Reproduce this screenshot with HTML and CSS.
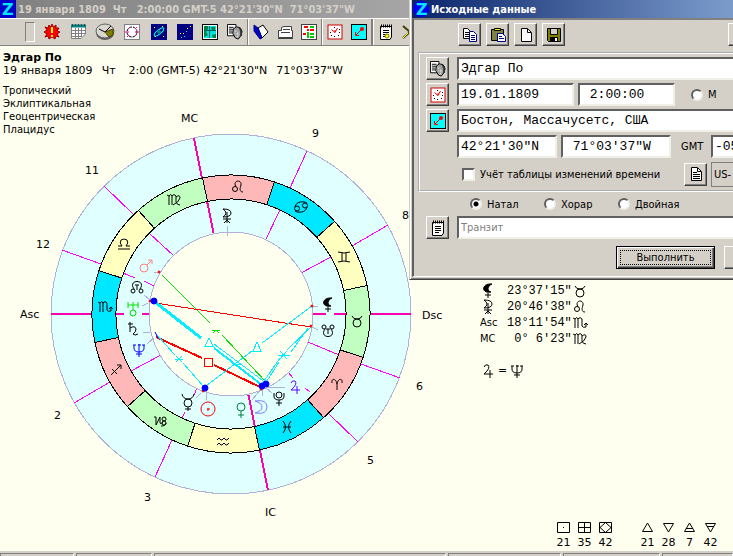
FILE: index.html
```html
<!DOCTYPE html>
<html lang="ru">
<head>
  <meta charset="UTF-8" />
  <meta name="viewport" content="width=device-width, initial-scale=1.0"/>
  <title>Эдгар По - 19 января 1809</title>
  <link rel="stylesheet" href="styles.css">
</head>
<body>

  <!-- Символы: знаки, планеты, иконки -->
  <svg class="defs" aria-hidden="true">
    <defs>
      <g id="aries"><path d="M-5 -1C-6 -6 -1 -6 0 0V6M0 0C1 -6 6 -6 5 -1"/></g>
      <g id="taurus"><circle cx="0" cy="2" r="4"/><path d="M-5 -5Q-4 -2 0 -2Q4 -2 5 -5"/></g>
      <g id="gemini"><path d="M-6 -5Q0 -3 6 -5M-6 5Q0 3 6 5M-2 -4V4M2 -4V4"/></g>
      <g id="cancer"><circle cx="-4" cy="1.5" r="2.5"/><circle cx="4" cy="-1.5" r="2.5"/><path d="M-6 0C-5 -6 3 -6 6 -4M6 0C5 6 -3 6 -6 4"/></g>
      <g id="leo"><circle cx="-3" cy="2" r="2.5"/><path d="M-2 0C-6 -7 4 -8 3 -2C2 1 1 5 5 5"/></g>
      <g id="virgo"><path d="M-7 -5L-5 -4V5M-5 -4Q-3 -7 -2 -4V5M-2 -4Q0 -7 2 -4V2Q3 5 6 5M2 -3Q6 -6 6 -2Q5 2 -1 5"/></g>
      <g id="libra"><path d="M-6 5H6M-6 2H-2Q-5 -1 -3 -4Q0 -6 3 -4Q5 -1 2 2H6"/></g>
      <g id="scorpio"><path d="M-7 -5L-5 -4V5M-5 -4Q-3 -7 -2 -4V5M-2 -4Q0 -7 2 -4V3Q3 5 6 4V0M4 2L6 0L8 2"/></g>
      <g id="sagittarius"><path d="M-5 5L5 -5M1 -5H5V-1M-4 -1L1 4"/></g>
      <g id="capricorn"><path d="M-6 -4H-4V4L0 -4V2Q1 4 3 1M6 2Q6 5 1 5"/><circle cx="4" cy="-2" r="2"/><circle cx="4" cy="2" r="2"/></g>
      <g id="aquarius"><path d="M-6 -1L-4 -3L-2 -1H-1L1 -3L3 -1H4L6 -3M-6 4L-4 2L-2 4H-1L1 2L3 4H4L6 2"/></g>
      <g id="pisces"><path d="M-4 -6Q1 0 -4 6M4 -6Q-1 0 4 6M-4 0H4"/></g>

      <g id="sun"><circle cx="0" cy="0" r="7"/><path d="M-1 0H2M0 -1V2"/></g>
      <g id="moon"><path d="M-6 -6Q6 -8 6 0Q6 8 -6 6Q1 4 1 0Q1 -4 -6 -6"/></g>
      <g id="mercury"><path d="M-6 -8Q-5 -3 0 -3Q5 -3 6 -8M0 5V9M-3 7H3"/><circle cx="0" cy="1" r="4"/></g>
      <g id="venus"><circle cx="0" cy="-3" r="4"/><path d="M0 1V8M-3 5H3"/></g>
      <g id="mars"><circle cx="-2" cy="2" r="4"/><path d="M1 -1L6 -6M2 -6H6V-2"/></g>
      <g id="jupiter"><path d="M-4 -4Q-3 -7 0 -6Q3 -3 -4 3H5M2 -1V7"/></g>
      <g id="saturn"><path d="M-5 -5H0M-3 -7V3M-3 -1Q2 -4 3 0Q3 3 0 5Q2 7 5 5"/></g>
      <g id="uranus"><path d="M-5 -7V-1M5 -7V-1M-5 -4H5M0 -7V1"/><circle cx="0" cy="4" r="3"/></g>
      <g id="neptune"><path d="M-5 -5V-2Q-5 2 0 2Q5 2 5 -2V-5M0 -6V7M-3 4H3M-6 -5H-3M3 -5H6M-1 -5H2"/></g>
      <g id="pluto"><circle cx="0" cy="-3" r="3"/><path d="M-5 -5V-2Q-5 2 0 2Q5 2 5 -2V-5M0 2V8M-3 5H3"/></g>
      <g id="node"><circle cx="-4" cy="4" r="2"/><circle cx="4" cy="4" r="2"/><path d="M-3 2C-10 -8 10 -8 3 2M-2 -2H2M0 -2V3"/></g>
      <g id="snode"><circle cx="-4" cy="-4" r="2"/><circle cx="4" cy="-4" r="2"/><path d="M-3 -2C-10 8 10 8 3 -2M-2 -2H2M0 -2V3"/></g>
      <g id="lilith"><path fill="currentColor" d="M4 -7C-7 -8 -7 3 3 1C-1 0 -1 -5 4 -7Z"/><path d="M0 2V7M-3 4H3"/></g>
      <g id="selena"><path d="M-4 -7Q4 -7 4 -3Q4 1 -4 1Q2 -3 -4 -7M0 -4V7M-4 3H4M-3 7L0 4L3 7"/></g>

      <path id="sector" d="M139 0A139 139 0 0 0 120.4 -69.5L99.6 -57.5A115 115 0 0 1 115 0Z"/>

      <g id="ic-face">
        <path fill="#fff" stroke="#000" d="M0.500 0.500H9.500V12.500H0.500Z"/>
        <path stroke="#000" fill="none" d="M2 3.500H7M2 5.500H7M2 7.500H6M2 9.500H6"/>
        <path fill="#a0a0a0" stroke="#000" d="M7 5L10 3L14 4L16 8L15 12L12 16L9 15L6 10Z"/>
        <path fill="#303030" d="M12 3L16 6V12L14 14L14 8Z"/>
        <path stroke="#f0f0f0" fill="none" d="M8 7.500H10M9 10.500H10M11.500 9V12M10 13.500H12"/>
      </g>
      <g id="ic-clock">
        <rect x="1" y="1" width="14" height="14" fill="#fff" stroke="#d00000"/>
        <path stroke="#f00" fill="none" d="M4.500 5.500L8 8.500L10.500 4M8 8.500V6"/>
        <path stroke="#000" fill="none" d="M7.500 3V4M7.500 12V13M3 8.500H4M12 8.500H13M4 11.500H5M11 11.500H12M12 5.500H13"/>
      </g>
      <g id="ic-place">
        <rect x="0.500" y="0.500" width="15" height="15" fill="#0ff" stroke="#000"/>
        <path stroke="#f00" fill="none" d="M11 5L5 11M4.500 8V11.500H8"/><circle cx="11" cy="5" r="2" fill="#f00"/>
      </g>
      <g id="ic-note">
        <path fill="#fff" stroke="#000" d="M2.500 2.500H13.500V13L12 15.500H2.500Z"/>
        <path stroke="#000" fill="none" stroke-dasharray="1 1" stroke-width="3" d="M3 2H14"/>
        <path stroke="#000" fill="none" d="M5 6.500H11M5 8.500H11M5 10.500H11M5 12.500H9"/>
      </g>
      <g id="ic-doc">
        <path fill="#fff" stroke="#000" d="M3.500 1.500H9.500L13.500 5.500V14.500H3.500Z"/>
        <path stroke="#000" fill="none" d="M9.500 2V5.500H13"/>
      </g>
    </defs>
  </svg>

  <header class="titlebar">
    <svg class="logo" viewBox="0 0 16 18"><rect width="16" height="18" fill="#0000c8"/><text x="2" y="15">Z</text></svg>
    <span>19 января 1809  Чт   2:00:00 GMT-5 42°21'30"N  71°03'37"W</span>
  </header>

  <nav class="toolbar">
    <div class="grip"></div>
    <button class="tool" aria-label="Сейчас"><svg viewBox="0 0 16 16"><path fill="#f00" stroke="#a00000" d="M8 0L9.500 3L12 1L12 4L15 4L13 7L16 8L13 10L15 13L12 12L11 15L8 13L5 15L4 12L1 13L3 10L0 8L3 6L1 3L4 4L5 1L7 3Z"/><path fill="#ff0" d="M7 3H9V9H7ZM7 11H9V13H7Z"/></svg></button>
    <button class="tool wide" aria-label="Календарь"><svg viewBox="0 0 16 16"><path fill="#fff" stroke="#808080" d="M1.500 1.500H15.500V10L11 14.500H1.500Z"/><path stroke="#008080" stroke-width="3" d="M1 2H16"/><path stroke="#808080" d="M2 6.500H15M2 9.500H15M2 12.500H12M5.500 4V14M8.500 4V14M11.500 4V13"/><path stroke="#000" stroke-dasharray="1 2" d="M2 1H16"/></svg></button>
    <button class="tool wide" aria-label="Время"><svg class="big" viewBox="0 0 20 18"><ellipse cx="10" cy="10" rx="9" ry="7" fill="#606060"/><ellipse cx="10" cy="8" rx="9" ry="7" fill="#d8d8d0" stroke="#606060"/><path fill="#808000" stroke="#404000" d="M10 9L18 6V12L14 14Z"/><path stroke="#000" d="M4 6L10 9L16 3"/></svg></button>
    <button class="tool wide" aria-label="Карта"><svg viewBox="0 0 16 16"><rect x="0.500" y="0.500" width="15" height="15" fill="#fff" stroke="#808080"/><circle cx="8" cy="8" r="5" fill="none" stroke="#000" stroke-dasharray="3 1"/><path stroke="#f0a" d="M1 8H5M11 8H15M11 5L13 3M5 11L3 13M5 5L4 4M11 11L12 12"/></svg></button>
    <button class="tool wide" aria-label="Система"><svg viewBox="0 0 16 16"><rect width="16" height="16" fill="#000080"/><ellipse cx="8" cy="8" rx="6" ry="2" fill="none" stroke="#0ff" transform="rotate(-40 8 8)"/><circle cx="8" cy="8" r="2" fill="#008080"/><path fill="#ff0" d="M3 3H4V4H3ZM12 12H13V13H12ZM4 12H5V13H4ZM11 2H12V3H11Z"/></svg></button>
    <button class="tool" aria-label="Небо"><svg viewBox="0 0 16 16"><rect width="16" height="16" fill="#000080"/><path fill="#ff0" d="M13 2H14V3H13ZM10 4H11V5H10ZM3 9H4V10H3ZM6 9H7V10H6Z"/><path fill="#0ff" d="M9 7H10V8H9ZM4 13H5V14H4ZM7 12H8V13H7Z"/></svg></button>
    <button class="tool" aria-label="Атлас"><svg viewBox="0 0 16 16"><rect x="0.500" y="0.500" width="15" height="15" fill="#fff" stroke="#000"/><rect x="2" y="2" width="12" height="12" fill="#00e0e0"/><path fill="#008040" d="M2 2H6V5L4 8L6 11L2 13ZM9 3H13V6L10 7ZM10 11L14 10V14H11Z"/><path stroke="#006060" fill="none" d="M2 6.500H14M7.500 2V14"/></svg></button>
    <button class="tool" aria-label="База данных"><svg viewBox="0 0 17 17"><use href="#ic-face"/></svg></button>
    <div class="sep"></div>
    <button class="tool small" aria-label="Книга"><svg viewBox="0 0 16 16"><path fill="#fff" stroke="#000" d="M5 4L10 1L15 8L9 14Z"/><path fill="#00c" stroke="#000080" d="M1 1L5 4L9 14L7 15L1 7Z"/></svg></button>
    <button class="tool small" aria-label="Папка"><svg viewBox="0 0 16 16"><path fill="#fff" stroke="#404040" d="M1.500 6.500H4.500V3.500L7 2.500H14.500V6.500H15.500V13.500H1.500Z"/><path stroke="#404040" d="M6 5.500H13M4 8.500H13M1 14.500H16"/></svg></button>
    <button class="tool small" aria-label="Таблица"><svg viewBox="0 0 16 16"><rect x="0.500" y="0.500" width="15" height="15" fill="#fff" stroke="#404040"/><path fill="#f00" d="M3 2H7V4H3ZM2 9H5V11H2ZM9 5H13V7H9ZM6 5H8V7H6Z"/><path fill="#0c0" d="M9 2H13V4H9ZM6 8H8V14H6ZM9 9H13V11H9ZM9 12H13V14H9Z"/></svg></button>
    <div class="sep"></div>
    <button class="tool small" aria-label="Часы"><svg viewBox="0 0 16 16"><use href="#ic-clock"/></svg></button>
    <button class="tool small" aria-label="Место"><svg viewBox="0 0 16 16"><use href="#ic-place"/></svg></button>
    <div class="sep dark"></div>
    <button class="tool small" aria-label="Настройки"><svg viewBox="0 0 16 16"><use href="#ic-note"/><circle cx="9" cy="12" r="2" fill="#ff0" stroke="#808000"/></svg></button>
    <button class="tool small" aria-label="Инструменты"><svg viewBox="0 0 16 16"><path stroke="#404000" stroke-width="2" fill="none" d="M1 2L8 8M8 8L1 14"/><path stroke="#ff0" fill="none" d="M6 9L1 14"/></svg></button>
  </nav>

  <main class="canvas">
    <section class="info">
      <h1>Эдгар По</h1>
      <p class="moment"><span>19 января 1809</span><span>Чт</span><span class="clock">2:00 (GMT-5) 42°21'30"N</span><span>71°03'37"W</span></p>
      <ul>
        <li>Тропический</li>
        <li>Эклиптикальная</li>
        <li>Геоцентрическая</li>
        <li>Плацидус</li>
      </ul>
    </section>

    <svg class="chart" viewBox="0 46 450 505">
      <g class="wheel" transform="translate(231 314)">
        <circle class="disc" r="180"/>
        <g class="cusp">
          <path d="M-127 -128L-97 -99M-82 -81L-57 -58M-169 -64L-130 -50M-108 -41L-96 -36M-87 -33L-77 -28"/>
          <path d="M76 -163L59 -126M49 -104L34 -73M157 -89L121 -68M100 -57L70 -41"/>
          <path d="M127 128L97 99M79 78L74 74M62 64L57 58M169 64L130 50M108 41L77 28"/>
          <path d="M-76 163L-59 126M-49 104L-46 98M-37 81L-34 74M-157 89L-121 68M-100 57L-70 41"/>
        </g>
        <g class="axis">
          <path d="M-37 -176L-29 -136M-24 -113L-17 -79M37 176L29 136M24 113L17 79"/>
          <path d="M-180 0H-139M-115 0H-107M-89 0H-81M180 0H139M115 0H103M95 0H82"/>
        </g>
        <circle class="core" r="82"/>
        <g class="ring">
          <use class="air" href="#sector" transform="rotate(-11.8)"/>
          <use class="water" href="#sector" transform="rotate(-41.8)"/>
          <use class="fire" href="#sector" transform="rotate(-71.8)"/>
          <use class="earth" href="#sector" transform="rotate(-101.8)"/>
          <use class="air" href="#sector" transform="rotate(-131.8)"/>
          <use class="water" href="#sector" transform="rotate(-161.8)"/>
          <use class="fire" href="#sector" transform="rotate(-191.8)"/>
          <use class="earth" href="#sector" transform="rotate(-221.8)"/>
          <use class="air" href="#sector" transform="rotate(-251.8)"/>
          <use class="water" href="#sector" transform="rotate(-281.8)"/>
          <use class="fire" href="#sector" transform="rotate(-311.8)"/>
          <use class="earth" href="#sector" transform="rotate(-341.8)"/>
        </g>
      </g>

      <!-- Аспекты -->
      <g class="aspects">
        <path class="green" d="M162 275L210 323M222 335L266 382M212 330H220M213 333L216 330L219 333"/>
        <path class="red" d="M155 303L311 327M204 358H212V366H204Z"/>
        <path class="red bold" d="M156 337L202 358M214 365L260 387"/>
        <path class="cyan wide" d="M155 302L201 338"/>
        <path class="cyan bold" d="M214 348L262 385"/>
        <path class="cyan" d="M156 334L175 355M183 363L204 387M206 386L252 351M262 343L312 306M214 344L266 383M265 384L279 362M287 350L311 327M262 384L280 358M291 352L308 328"/>
        <path class="cyan" d="M209 338L205 346H213ZM257 342L253 351H261ZM175 359H183M176 356L182 362M182 356L176 362M278 355H290M280 351L287 359M287 351L280 359M233 364H241"/>
        <path class="pointer" d="M154 272L158 273M144 295L150 300M142 306L148 303M143 332L150 333M147 344L154 338M196 398L201 393M207 400L206 391M227 226V236M252 400L261 389M262 396V388M272 393L266 388M285 387H266M318 306H313M318 330L312 327"/>
      </g>
      <g class="marks">
        <circle cx="159" cy="272" r="1"/><circle cx="150" cy="301" r="1"/><circle cx="203" cy="391" r="1"/><circle cx="261" cy="389" r="1"/><circle cx="312" cy="306" r="1"/><circle cx="311" cy="326" r="1"/>
      </g>
      <g class="dots">
        <circle cx="154" cy="301" r="3"/><circle cx="205" cy="388" r="3"/><circle cx="262" cy="386" r="3"/><circle cx="266" cy="384" r="3"/><path d="M155 332L158 338"/>
      </g>

      <g class="glyphs">
        <use href="#leo" x="238" y="187"/>
        <use href="#cancer" x="301" y="207"/>
        <use href="#gemini" x="344" y="257"/>
        <use href="#taurus" x="357" y="321"/>
        <use href="#aries" x="337" y="384"/>
        <use href="#pisces" x="287" y="427"/>
        <use href="#aquarius" x="223" y="441"/>
        <use href="#capricorn" x="160" y="421"/>
        <use href="#sagittarius" x="116" y="370"/>
        <use href="#scorpio" x="105" y="307"/>
        <use href="#libra" x="124" y="244"/>
        <use href="#virgo" x="174" y="200"/>

        <use href="#selena" x="227" y="216"/>
        <use href="#mars" x="146" y="266" class="c-mars"/>
        <use href="#node" x="137" y="287"/>
        <use href="#uranus" x="133" y="309" class="c-uranus"/>
        <use href="#saturn" x="133" y="329"/>
        <use href="#neptune" x="139" y="350" class="c-neptune"/>
        <use href="#mercury" x="188" y="402"/>
        <use href="#sun" x="208" y="409" class="c-sun"/>
        <use href="#venus" x="241" y="410" class="c-venus"/>
        <use href="#moon" x="261" y="407" class="c-moon"/>
        <use href="#pluto" x="279" y="398"/>
        <use href="#jupiter" x="295" y="387" class="c-jupiter"/>
        <use href="#lilith" x="328" y="305"/>
        <use href="#snode" x="328" y="331"/>
      </g>

      <g class="houses">
        <text x="181" y="122">MC</text>
        <text x="312" y="137">9</text>
        <text x="402" y="219">8</text>
        <text x="422" y="319">Dsc</text>
        <text x="416" y="390">6</text>
        <text x="367" y="464">5</text>
        <text x="265" y="516">IC</text>
        <text x="144" y="501">3</text>
        <text x="54" y="419">2</text>
        <text x="20" y="318">Asc</text>
        <text x="36" y="248">12</text>
        <text x="85" y="174">11</text>
      </g>
    </svg>

    <aside class="side">
      <div>
        <table class="points">
          <tr><th><svg class="sign" viewBox="-8 -8 16 16"><use href="#lilith"/></svg></th><td>23°37'15"</td><td><svg class="sign" viewBox="-8 -8 16 16"><use href="#taurus"/></svg></td></tr>
          <tr><th><svg class="sign" viewBox="-8 -8 16 16"><use href="#selena"/></svg></th><td>20°46'38"</td><td><svg class="sign" viewBox="-8 -8 16 16"><use href="#leo"/></svg></td></tr>
          <tr><th>Asc</th><td>18°11'54"</td><td><svg class="sign" viewBox="-8 -8 16 16"><use href="#scorpio"/></svg></td></tr>
          <tr><th>MC</th><td> 0° 6'23"</td><td><svg class="sign" viewBox="-8 -8 16 16"><use href="#virgo"/></svg></td></tr>
        </table>
        <p class="reception"><svg class="sign" viewBox="-8 -8 16 16"><use href="#jupiter"/></svg>=<svg class="sign" viewBox="-8 -8 16 16"><use href="#neptune"/></svg></p>
      </div>

      <ul class="counts">
        <li><svg viewBox="0 0 13 11"><path d="M0.500 0.500H12.500V10.500H0.500ZM6 5.500H7"/></svg>21</li>
        <li><svg viewBox="0 0 13 11"><path d="M0.500 0.500H12.500V10.500H0.500ZM0 5.500H13M6.500 0V11"/></svg>35</li>
        <li><svg viewBox="0 0 13 11"><path d="M0.500 0.500H12.500V10.500H0.500ZM6.500 0.500L12 5.500L6.500 10.500L1 5.500Z"/></svg>42</li>
        <li class="gap"><svg viewBox="0 0 13 11"><path d="M6.500 1L1.500 9.500H11.500Z"/></svg>21</li>
        <li><svg viewBox="0 0 13 11"><path d="M6.500 10L1.500 1.500H11.500Z"/></svg>28</li>
        <li><svg viewBox="0 0 13 11"><path d="M6.500 1L1.500 9.500H11.500ZM3 6.500H10"/></svg>7</li>
        <li><svg viewBox="0 0 13 11"><path d="M6.500 10L1.500 1.500H11.500ZM3 4.500H10"/></svg>42</li>
      </ul>
    </aside>
  </main>

  <footer class="statusbar">
    <div class="p1"></div><div class="p2"></div><div class="p3"></div><div class="p4"></div><div class="p5"></div><div class="p6"></div>
  </footer>

  <!-- Окно "Исходные данные" -->
  <form class="dialog">
    <div class="dialog-title">
      <svg class="logo" viewBox="0 0 18 18"><circle cx="9" cy="9" r="8" fill="#0000f0"/><text x="4" y="15">Z</text></svg>
      <span>Исходные данные</span>
    </div>
    <div class="dialog-body">
      <div class="dialog-tools">
        <button type="button" class="btn" aria-label="Копировать"><svg viewBox="0 0 16 16"><path fill="#fff" stroke="#000" d="M1.500 1.500H5.500L8.500 4.500V11.500H1.500Z"/><path stroke="#000" d="M3 5.500H7M3 7.500H7M3 9.500H7"/><path fill="#fff" stroke="#000080" d="M7.500 4.500H11.500L14.500 7.500V14.500H7.500Z"/><path stroke="#000080" d="M9 8.500H13M9 10.500H13M9 12.500H13"/></svg></button>
        <button type="button" class="btn" aria-label="Вставить"><svg viewBox="0 0 16 16"><path fill="#808040" stroke="#000" d="M1.500 2.500H13.500V13.500H1.500Z"/><path fill="#ff0" stroke="#000" d="M4.500 3.500V1.500H10.500V3.500Z"/><path fill="#fff" stroke="#000080" d="M7.500 6.500H12.500L15.500 9.500V14.500H7.500Z"/><path stroke="#000080" d="M9 9.500H12M9 11.500H14"/></svg></button>
        <button type="button" class="btn" aria-label="Новый"><svg viewBox="0 0 16 16"><use href="#ic-doc"/></svg></button>
        <button type="button" class="btn" aria-label="Сохранить"><svg viewBox="0 0 16 16"><path fill="#808000" stroke="#000" d="M1.500 1.500H14.500V14.500H2.500L1.500 13.500Z"/><path fill="#d4d0c8" stroke="#000" d="M4.500 1.500H11.500V7.500H4.500Z"/><path fill="#000" d="M4 10H12V14H4Z"/><path fill="#fff" d="M9 11H11V14H9Z"/></svg></button>
        <button type="button" class="btn more" aria-label="Ещё"></button>
      </div>

      <div class="group">
        <div class="row">
          <button type="button" class="btn" aria-label="База"><svg viewBox="0 0 17 17"><use href="#ic-face"/></svg></button>
          <input class="field full" type="text" aria-label="Имя" value="Эдгар По">
        </div>
        <div class="row">
          <button type="button" class="btn" aria-label="Часы"><svg viewBox="0 0 16 16"><use href="#ic-clock"/></svg></button>
          <input class="field date" type="text" aria-label="Дата" value="19.01.1809">
          <input class="field time" type="text" aria-label="Время" value=" 2:00:00">
          <label class="sex"><input type="radio" name="sex">М</label>
        </div>
        <div class="row">
          <button type="button" class="btn" aria-label="Атлас"><svg viewBox="0 0 16 16"><use href="#ic-place"/></svg></button>
          <input class="field full" type="text" aria-label="Место" value="Бостон, Массачусетс, США">
        </div>
        <div class="row coords">
          <input class="field lat" type="text" aria-label="Широта" value="42°21'30&quot;N">
          <input class="field lon" type="text" aria-label="Долгота" value=" 71°03'37&quot;W">
          <label class="gmt" for="gmt">GMT</label>
          <input class="field full" type="text" id="gmt" value="-05">
        </div>
        <div class="row zone">
          <label><input type="checkbox">Учёт таблицы изменений времени</label>
          <button type="button" class="btn" aria-label="Таблица времени"><svg viewBox="0 0 16 16"><use href="#ic-doc"/><path stroke="#000" d="M5 6.500H9M5 8.500H12M5 10.500H12M5 12.500H12"/></svg></button>
          <div class="tz">US-</div>
        </div>
      </div>

      <div class="modes">
        <label><input type="radio" name="mode" checked>Натал</label>
        <label><input type="radio" name="mode">Хорар</label>
        <label><input type="radio" name="mode">Двойная</label>
      </div>

      <div class="row transit">
        <button type="button" class="btn" aria-label="Заметки"><svg viewBox="0 0 16 16"><use href="#ic-note"/></svg></button>
        <input class="field full" type="text" aria-label="Транзит" value="Транзит" disabled>
      </div>

      <div class="actions">
        <button type="button" class="btn default"><span>Выполнить</span></button>
        <button type="button" class="btn cancel" aria-label="Отмена"></button>
      </div>
    </div>
  </form>

</body>
</html>
```

FILE: styles.css
```css
* { box-sizing: border-box; }

body {
  margin: 0;
  height: 100vh;
  display: flex;
  flex-direction: column;
  position: relative;
  overflow: hidden;
  background-color: #ffffef;
  color: #000;
  font-family: "DejaVu Sans", Verdana, sans-serif;
  font-size: 11px;
}

svg { display: block; }

button, input { margin: 0; }

.defs {
  position: absolute;
  width: 0;
  height: 0;
}

.logo text {
  font-family: "DejaVu Sans", Verdana, sans-serif;
  font-size: 16px;
  font-weight: bold;
  fill: #00e8ff;
}

/* Main window */
.titlebar {
  flex: none;
  height: 18px;
  display: flex;
  align-items: center;
  gap: 2px;
  background: linear-gradient(to right, #808080, #c0c0c0 700px);
  color: #d4d0c8;
  font-family: "DejaVu Sans Condensed", Tahoma, sans-serif;
  font-weight: bold;
  white-space: pre;
}

.titlebar .logo {
  width: 16px;
  height: 18px;
}

.toolbar {
  flex: none;
  height: 28px;
  display: flex;
  align-items: center;
  overflow: hidden;
  background-color: #d4d0c8;
  border-top: 1px solid #fff;
  border-bottom: 1px solid #808080;
}

.grip {
  width: 10px;
  height: 20px;
  margin: 0 4px 0 25px;
  border: 1px solid #fff;
  border-top-color: #808080;
  border-left-color: #808080;
}

.tool {
  flex: none;
  width: 25px;
  height: 24px;
  padding: 0;
  border: 0;
  background: none;
  display: flex;
  align-items: center;
  justify-content: center;
}

.tool.wide { width: 27px; }
.tool.small { width: 24px; }

.tool svg,
.btn svg {
  width: 16px;
  height: 16px;
  fill: none;
}

.tool .big {
  width: 20px;
  height: 18px;
}

.sep {
  flex: none;
  width: 2px;
  height: 26px;
  border-left: 1px solid #808080;
  border-right: 1px solid #fff;
}

.sep.dark {
  width: 3px;
  border-left: 2px solid #808080;
}

.canvas {
  flex: 1;
  min-height: 0;
  display: grid;
  grid-template-columns: 450px 1fr;
  grid-template-rows: 100%;
}

.info {
  grid-area: 1 / 1;
  padding: 5px 3px;
}

.info h1 {
  margin: 0;
  font-size: 11px;
  line-height: 13px;
}

.moment {
  display: flex;
  gap: 9px;
  margin: 0;
  line-height: 13px;
  white-space: pre;
}

.clock { margin-left: 4px; }

.info ul {
  margin: 7px 0 0;
  padding: 0;
  list-style: none;
  font-size: 10px;
  line-height: 13px;
}

/* Chart */
.chart {
  grid-area: 1 / 1;
  width: 450px;
  height: 505px;
  fill: none;
  stroke-width: 1px;
}

.wheel,
.aspects {
  shape-rendering: crispEdges;
}

.disc { fill: #e0ffff; stroke: #b0b0d8; }
.core { fill: #ffffef; stroke: #b0b0d8; }
.cusp { stroke: #f0f; }
.axis { stroke: #ff00b0; stroke-width: 2px; }
.ring { stroke: #000; }
.air { fill: #ffffc0; }
.water { fill: #00e8ff; }
.fire { fill: #ffb8b8; }
.earth { fill: #c0ffc0; }

.green { stroke: #00e000; }
.red { stroke: #f00; }
.bold { stroke-width: 2px; }
.cyan { stroke: #00f0ff; }
.cyan.wide { stroke-width: 3px; }
.pointer { stroke: #b0b0d8; }
.dots { fill: #00f; stroke: #00f; }
.marks { fill: #f00; stroke: #f00; }

.glyphs { stroke: currentColor; }
.c-mars { color: #ff8080; }
.c-uranus { color: #00e000; }
.c-neptune { color: #00f; }
.c-sun { color: #f00; }
.c-venus { color: #008040; }
.c-moon { color: #8080ff; }
.c-jupiter { color: #6000ff; }

.houses text { fill: #000; }

/* Right side: points and counters */
.side {
  grid-area: 1 / 2;
  padding: 237px 12px 2px 30px;
  display: flex;
  flex-direction: column;
  justify-content: space-between;
}

.sign {
  width: 16px;
  height: 16px;
  fill: none;
  stroke: currentColor;
}

.points {
  border-collapse: collapse;
  font-family: "Liberation Mono", "Courier New", monospace;
  font-size: 12px;
  line-height: 16px;
}

.points th,
.points td {
  height: 16px;
  padding: 0;
  white-space: pre;
}

.points th {
  width: 27px;
  font-family: "DejaVu Sans Condensed", Tahoma, sans-serif;
  font-size: 11px;
  font-weight: normal;
  text-align: left;
}

.reception {
  display: flex;
  align-items: center;
  gap: 2px;
  margin: 16px 0 0;
  line-height: 16px;
}

.counts {
  margin: 0;
  padding: 0;
  list-style: none;
  display: flex;
  justify-content: flex-end;
}

.counts li {
  width: 21px;
  display: flex;
  flex-direction: column;
  align-items: center;
  gap: 3px;
  line-height: 13px;
}

.counts .gap { margin-left: 21px; }

.counts svg {
  width: 13px;
  height: 11px;
  fill: none;
  stroke: #000;
}

/* Status bar */
.statusbar {
  flex: none;
  height: 5px;
  padding-top: 2px;
  display: flex;
  gap: 2px;
  background-color: #d4d0c8;
}

.statusbar div {
  border-top: 1px solid #808080;
  border-left: 1px solid #808080;
  border-right: 1px solid #fff;
}

.p1 { width: 74px; }
.p2 { width: 76px; }
.p3 { width: 292px; }
.p4 { width: 113px; }
.p5 { width: 97px; }
.p6 { flex: 1; }

/* Dialog window */
.dialog {
  position: absolute;
  top: 0;
  left: 409px;
  right: 0;
  padding: 0 0 2px 2px;
  background-color: #d4d0c8;
  border-left: 1px solid #d4d0c8;
  border-bottom: 1px solid #404040;
  box-shadow: inset 1px 0 #fff, inset 0 -1px #808080;
  font-family: "DejaVu Sans Condensed", Tahoma, sans-serif;
}

.dialog-title {
  height: 18px;
  display: flex;
  align-items: center;
  gap: 1px;
  background: linear-gradient(to right, #0a246a, #7c9ccc);
  color: #fff;
  font-weight: bold;
}

.dialog-title .logo {
  width: 18px;
  height: 18px;
}

.dialog-body {
  padding: 3px 0 7px;
  border: 2px solid #808080;
  border-left-color: #606060;
  border-right: 0;
  border-bottom: 1px solid #fff;
}

.dialog-tools {
  display: flex;
  gap: 5px;
  padding-left: 44px;
}

.btn {
  flex: none;
  width: 23px;
  height: 23px;
  padding: 0;
  display: flex;
  align-items: center;
  justify-content: center;
  background-color: #d4d0c8;
  border: 1px solid #404040;
  border-top-color: #fff;
  border-left-color: #fff;
  box-shadow: inset -1px -1px #808080;
  color: #000;
  font: inherit;
}

.btn.more {
  width: 5px;
  margin-left: auto;
  border-right: 0;
  box-shadow: inset 0 -1px #808080;
}

.group {
  margin: 6px 0 0 4px;
  padding: 3px 0 3px 6px;
  border: 2px groove #fff;
  border-right: 0;
}

.row {
  display: flex;
  align-items: center;
  gap: 4px;
  height: 23px;
  margin-bottom: 3px;
}

.row > .btn:first-child { margin-right: 4px; }

.field {
  height: 23px;
  padding: 0 2px;
  background-color: #fff;
  border: 2px solid #f0f0e8;
  border-top-color: #606060;
  border-left-color: #606060;
  border-radius: 0;
  color: #000;
  font-family: "Liberation Mono", "Courier New", monospace;
  font-size: 13px;
}

.field.full {
  flex: 1;
  min-width: 0;
  padding-right: 0;
  border-right: 0;
}

.date { width: 117px; }
.time { width: 97px; }
.lat { width: 100px; }
.lon { width: 110px; }

.field:disabled {
  color: #808080;
  font-family: inherit;
  font-size: 11px;
}

.coords { padding-left: 31px; }

.gmt {
  width: 32px;
  padding-left: 6px;
}

.dialog input[type="radio"],
.dialog input[type="checkbox"] {
  flex: none;
  appearance: none;
  width: 12px;
  height: 12px;
  background-color: #fff;
  border: 2px solid #f0f0e8;
  border-top-color: #606060;
  border-left-color: #606060;
}

.dialog input[type="checkbox"] {
  width: 13px;
  height: 13px;
}

.dialog input[type="radio"] { border-radius: 50%; }

.dialog input[type="radio"]:checked {
  background-image: radial-gradient(circle, #000 2px, #fff 3px);
}

.dialog label {
  display: flex;
  align-items: center;
  gap: 5px;
  white-space: nowrap;
}

.sex { margin-left: 12px; }

.zone {
  height: 26px;
  margin-bottom: 0;
  padding-left: 36px;
}

.zone label { width: 218px; }

.tz {
  flex: 1;
  min-width: 0;
  height: 25px;
  padding-left: 2px;
  border: 1px solid #808080;
  border-right: 0;
  line-height: 23px;
  white-space: nowrap;
}

.modes {
  display: flex;
  align-items: center;
  height: 24px;
  padding-left: 56px;
}

.modes label { width: 74px; }

.transit {
  padding-left: 12px;
  margin-bottom: 7px;
}

.actions {
  display: flex;
  gap: 9px;
  padding-left: 202px;
}

.default {
  width: 99px;
  padding: 2px;
  border: 1px solid #000;
  box-shadow: inset 1px 1px #fff, inset -1px -1px #404040, inset -2px -2px #808080;
}

.default span {
  flex: 1;
  line-height: 13px;
  margin: 1px;
  border: 1px dotted #000;
}

.cancel {
  flex: 1;
  border-right: 0;
  box-shadow: inset 0 -1px #808080;
}
```
